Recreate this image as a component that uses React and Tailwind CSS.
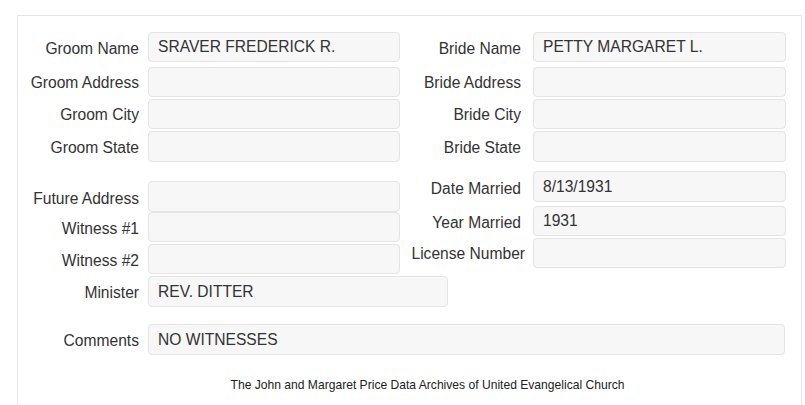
import React from "react";

const font = { fontFamily: '"Liberation Sans", Arial, sans-serif' };

function Field({ label, value, labelW, inputW, h = "h-[30px]", mt = "", nudge = "translate-y-[1px]" }) {
  return (
    <div className={`flex items-center ${mt}`}>
      <div className={`${labelW} shrink-0 text-right`}>
        <span className={`inline-block whitespace-nowrap ${nudge}`}>{label}</span>
      </div>
      <div
        className={`${inputW} ${h} shrink-0 flex items-center rounded-[4px] border border-[#e4e4e4] bg-[#f7f7f7] pl-[9px] text-[#333]`}
      >
        {value}
      </div>
    </div>
  );
}

export default function App() {
  return (
    <div className="min-h-[405px] bg-white text-[#333] text-[15.6px] overflow-hidden" style={font}>
      <div className="ml-[17px] mt-[15px] w-[785px] border border-b-0 border-[#e5e5e5] pb-[12px]">
        {/* names and addresses */}
        <div className="flex pt-[16px]">
          <div className="flex flex-col w-[382px]">
            <Field label="Groom Name" value="SRAVER FREDERICK R." labelW="w-[130px] pr-[9px]" inputW="w-[252px]" nudge="translate-y-[2px]" />
            <Field label="Groom Address" value="" labelW="w-[130px] pr-[9px]" inputW="w-[252px]" mt="mt-[5px]" />
            <Field label="Groom City" value="" labelW="w-[130px] pr-[9px]" inputW="w-[252px]" mt="mt-[2px]" />
            <Field label="Groom State" value="" labelW="w-[130px] pr-[9px]" inputW="w-[252px]" mt="mt-[2px]" h="h-[31px]" />
          </div>
          <div className="flex flex-col">
            <Field label="Bride Name" value="PETTY MARGARET L." labelW="w-[133px] pr-[12px]" inputW="w-[253px]" nudge="translate-y-[2px]" />
            <Field label="Bride Address" value="" labelW="w-[133px] pr-[12px]" inputW="w-[253px]" mt="mt-[5px]" />
            <Field label="Bride City" value="" labelW="w-[133px] pr-[12px]" inputW="w-[253px]" mt="mt-[2px]" />
            <Field label="Bride State" value="" labelW="w-[133px] pr-[12px]" inputW="w-[253px]" mt="mt-[2px]" h="h-[31px]" />
          </div>
        </div>

        {/* second block */}
        <div className="flex mt-[9px]">
          <div className="flex flex-col w-[382px] pt-[10px]">
            <Field label="Future Address" value="" labelW="w-[130px] pr-[9px]" inputW="w-[252px]" h="h-[31px]" nudge="translate-y-[2px]" />
            <Field label="Witness #1" value="" labelW="w-[130px] pr-[9px]" inputW="w-[252px]" nudge="translate-y-[2px]" />
            <Field label="Witness #2" value="" labelW="w-[130px] pr-[9px]" inputW="w-[252px]" mt="mt-[2px]" nudge="translate-y-[2px]" />
            <Field label="Minister" value="REV. DITTER" labelW="w-[130px] pr-[9px]" inputW="w-[300px]" mt="mt-[2px]" h="h-[31px]" />
          </div>
          <div className="flex flex-col">
            <Field label="Date Married" value="8/13/1931" labelW="w-[133px] pr-[12px]" inputW="w-[253px]" h="h-[31px]" nudge="translate-y-[2px]" />
            <Field label="Year Married" value="1931" labelW="w-[133px] pr-[12px]" inputW="w-[253px]" mt="mt-[4px]" nudge="translate-y-[2px]" />
            <Field label="License Number" value="" labelW="w-[133px] pr-[12px]" inputW="w-[253px]" mt="mt-[2px]" nudge="mr-[-4px] translate-y-[1px]" />
          </div>
        </div>

        {/* comments */}
        <div className="mt-[17px]">
          <Field label="Comments" value="NO WITNESSES" labelW="w-[130px] pr-[9px]" inputW="w-[637px]" h="h-[31px]" nudge="translate-y-[1px]" />
        </div>

        <div className="mt-[21px] pl-[36px] text-center text-[12.1px] text-[#222]">
          The John and Margaret Price Data Archives of United Evangelical Church
        </div>
      </div>
    </div>
  );
}
